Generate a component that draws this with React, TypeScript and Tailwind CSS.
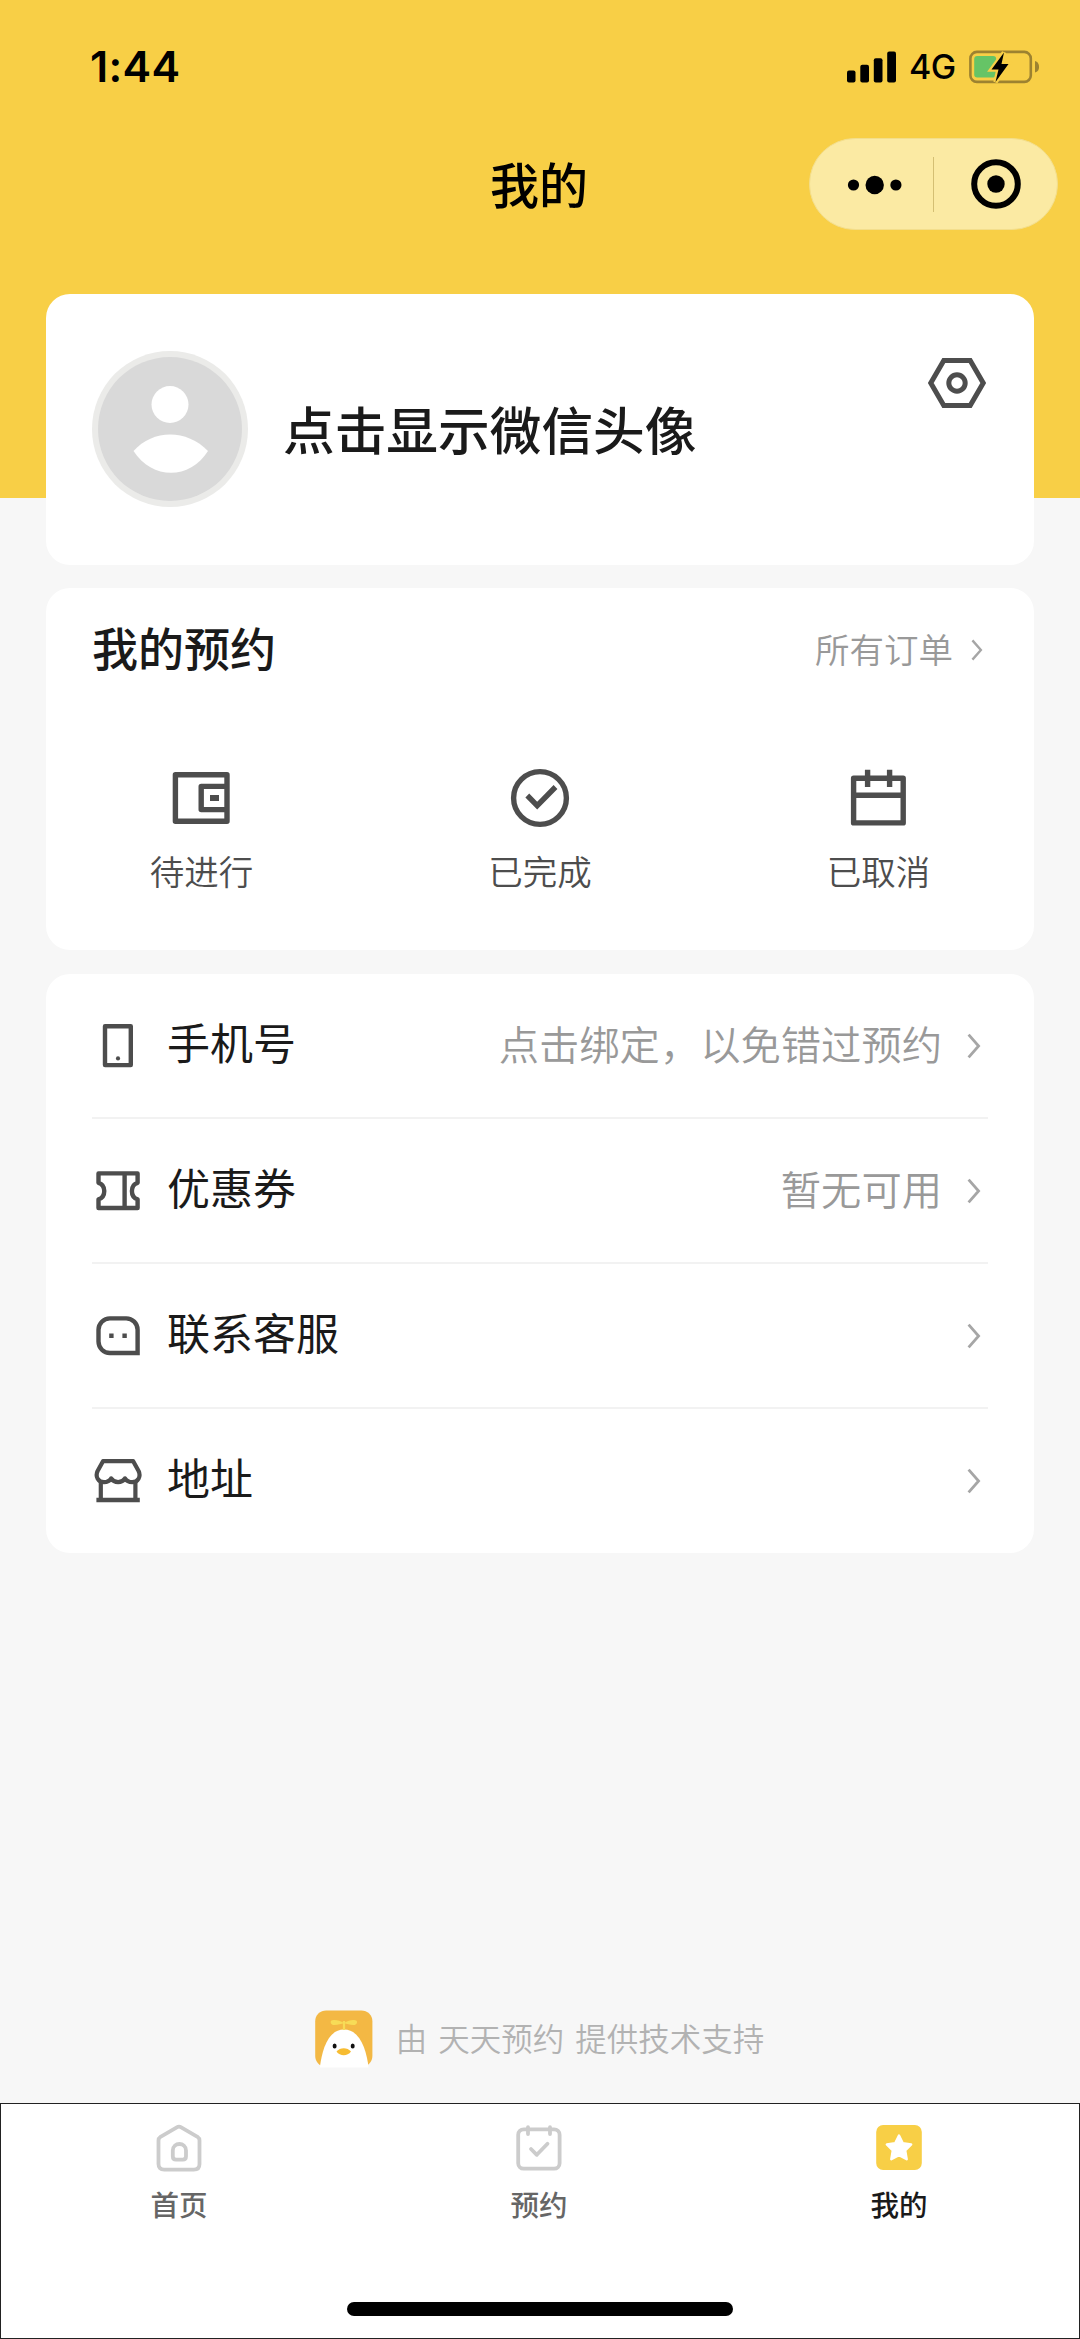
import React from 'react';
import clsx from 'clsx';

type IconProps = { className?: string };

/* ---------- status bar ---------- */

function SignalIcon() {
  return (
    <svg width="49" height="32" viewBox="0 0 49 32" fill="#000">
      <rect x="0" y="19.5" width="8.5" height="12" rx="2" />
      <rect x="13.3" y="13.7" width="8.7" height="17.8" rx="2" />
      <rect x="26.8" y="7.3" width="8.7" height="24.2" rx="2" />
      <rect x="40.2" y="0.5" width="8.8" height="31" rx="2" />
    </svg>
  );
}

function BatteryIcon() {
  return (
    <svg width="71" height="34" viewBox="0 0 71 34" fill="none">
      <rect x="1.4" y="1.9" width="60.4" height="30" rx="6.5" stroke="#9D8230" strokeWidth="2.6" />
      <path d="M66 11 C69.5 12 70 15 70 17 C70 19 69.5 21.5 66 22.6 Z" fill="#9D8230" />
      <rect x="5.2" y="6" width="22" height="21.5" rx="3" fill="#66C466" />
      <path
        d="M35 2.5 L22.5 19.6 H29.5 L26.5 32 L39.5 14 H32.5 Z"
        fill="#000"
        stroke="#F8CF46"
        strokeWidth="4.5"
        paintOrder="stroke"
      />
    </svg>
  );
}

function StatusBar() {
  return (
    <div className="flex h-[132px] items-start justify-between pl-[90px] pr-[40px] pt-[50px]">
      <span className="font-['Inter'] text-[43px] font-semibold leading-[33px] tracking-[0.3px] text-black">
        1:44
      </span>
      <div className="flex items-center">
        <SignalIcon />
        <span className="ml-[13px] w-[47px] whitespace-nowrap font-['Inter'] text-[34px] font-medium leading-[34px] tracking-[-0.5px] text-black">
          4G
        </span>
        <span className="ml-[13px]">
          <BatteryIcon />
        </span>
      </div>
    </div>
  );
}

/* ---------- nav bar ---------- */

function NavBar() {
  return (
    <div className="grid h-[104px] grid-cols-[249px_1fr_249px] items-center px-[22px]">
      <span />
      <h1 className="mb-[3px] pr-[2px] text-center text-[49px] font-medium leading-[60px] text-black">我的</h1>
      <div className="flex h-[92px] items-center rounded-full border border-[#F3DE8C] bg-[#FBEAA3]">
        <button className="flex flex-1 justify-center">
          <svg width="56" height="20" viewBox="0 0 56 20" className="ml-[7px] mt-px">
            <circle cx="6.5" cy="10" r="5.6" />
            <circle cx="27.7" cy="10" r="9.2" />
            <circle cx="48.9" cy="10" r="5.6" />
          </svg>
        </button>
        <span className="h-[55px] w-px bg-[#D4BF73]" />
        <button className="flex flex-1 justify-center">
          <svg width="50" height="50" viewBox="0 0 50 50">
            <circle cx="25" cy="25" r="21.8" fill="none" stroke="#000" strokeWidth="6" />
            <circle cx="25" cy="25" r="8.7" />
          </svg>
        </button>
      </div>
    </div>
  );
}

/* ---------- icons ---------- */

function Avatar() {
  return (
    <svg width="156" height="156" viewBox="0 0 156 156" className="mb-px shrink-0">
      <circle cx="78" cy="78" r="78" fill="#EBEBE9" />
      <circle cx="78" cy="78" r="72" fill="#D9D9D9" />
      <circle cx="78" cy="53.5" r="18.5" fill="#fff" />
      <path d="M41.5 100 C61 78 95 78 116 100 C98 129 60 129 41.5 100 Z" fill="#fff" />
    </svg>
  );
}

function SettingsIcon() {
  return (
    <svg width="58" height="52" viewBox="0 0 58 52" fill="none" stroke="#4D4D4D" strokeWidth="5">
      <path d="M15.8 3.5 H42.2 L55.2 26 L42.2 48.5 H15.8 L2.8 26 Z" />
      <circle cx="29" cy="26" r="8.2" />
    </svg>
  );
}

function WalletIcon() {
  return (
    <svg width="60" height="60" viewBox="0 0 60 60" fill="none" stroke="#4D4D4D" strokeWidth="5.4" strokeLinejoin="round">
      <rect x="3.4" y="6.7" width="51.6" height="46.6" />
      <path d="M55 18.4 H29.2 V41.6 H55" />
      <rect x="38" y="27" width="9" height="6" fill="#4D4D4D" stroke="none" />
    </svg>
  );
}

function DoneIcon() {
  return (
    <svg width="60" height="60" viewBox="0 0 60 60" fill="none" stroke="#4D4D4D" strokeWidth="5.4">
      <circle cx="30" cy="30" r="26.4" />
      <path d="M17.3 27.5 L27.2 37.6 L45.5 19" />
    </svg>
  );
}

function CalendarIcon() {
  return (
    <svg width="60" height="60" viewBox="0 0 60 60" fill="none" stroke="#4D4D4D" strokeWidth="5.4" strokeLinejoin="round">
      <rect x="4.6" y="10.3" width="49.6" height="44.6" />
      <path d="M4.6 27.3 H54.2 M18.6 1.8 V19 M40.6 1.8 V19" />
    </svg>
  );
}

function PhoneIcon() {
  return (
    <svg width="48" height="48" viewBox="0 0 48 48" fill="none" stroke="#4D4D4D" strokeWidth="4.4" strokeLinejoin="round">
      <rect x="11" y="4.3" width="25.8" height="38.8" />
      <circle cx="24" cy="36.4" r="2.1" fill="#4D4D4D" stroke="none" />
    </svg>
  );
}

function CouponIcon() {
  return (
    <svg width="48" height="48" viewBox="0 0 48 48" fill="none" stroke="#4D4D4D" strokeWidth="4.4" strokeLinejoin="round">
      <path d="M4.5 6.4 H43.6 V15.8 C36 18 36 30 43.6 32.4 V41 H4.5 V32.4 C12.2 30 12.2 18 4.5 15.8 Z" />
      <path d="M30.6 6.4 V41" />
    </svg>
  );
}

function ServiceIcon() {
  return (
    <svg width="48" height="48" viewBox="0 0 48 48" fill="none" stroke="#4D4D4D" strokeWidth="4.4">
      <path d="M43.6 41 H16 A11.4 11.4 0 0 1 4.5 29.6 V17.8 A11.4 11.4 0 0 1 16 6.4 H32 A11.4 11.4 0 0 1 43.6 17.8 Z" />
      <path d="M15.2 23.8 H19.6 M28.4 23.8 H32.8" />
    </svg>
  );
}

function StoreIcon() {
  return (
    <svg width="48" height="48" viewBox="0 0 48 48" fill="none" stroke="#4D4D4D" strokeWidth="4.2" strokeLinejoin="round">
      <path d="M9 4.2 H39.2 L44.6 14 C47.2 19.5 44 25.2 38.2 25.2 C35 25.2 32.6 24 31 21.4 C29.4 24 27 25.2 24.1 25.2 C21.2 25.2 18.8 24 17.2 21.4 C15.6 24 13.2 25.2 10 25.2 C4.2 25.2 1 19.5 3.6 14 Z" />
      <path d="M6.8 24 V43 M41.4 24 V43" />
      <path d="M2.4 43 H45.8" strokeWidth="4.6" />
    </svg>
  );
}

function Chevron({ className }: IconProps) {
  return (
    <svg viewBox="0 0 14 26" fill="none" stroke="#A6A6A6" strokeWidth="2.8" className={className}>
      <path d="M1.6 1.6 L11.6 13 L1.6 24.4" />
    </svg>
  );
}

function BrandLogo() {
  return (
    <svg width="58" height="58" viewBox="0 0 58 58">
      <rect x="0.2" y="0.4" width="57.2" height="56.6" rx="11" fill="#F3B844" />
      <path d="M4.8 57.4 C7 41 12.5 19.5 29 19.5 C45.5 19.5 51.5 41 53.6 57.4 Z" fill="#fff" />
      <path d="M29 20 V11" stroke="#F7DC57" strokeWidth="2.2" />
      <path
        d="M29 13 C24 9.6 18 9.2 16 10.8 C15 12.2 16 14.4 18 15 C22 15.4 26 14 29 13 C34 9.6 39.5 9.2 41.6 10.8 C42.7 12.2 41.8 14.4 39.6 15 C36 15.4 32 14 29 13 Z"
        fill="#F7DC57"
      />
      <ellipse cx="19.6" cy="36" rx="2" ry="2.5" fill="#111" />
      <ellipse cx="37.7" cy="36" rx="2" ry="2.5" fill="#111" />
      <path d="M21.5 41.5 C25 37 32.5 37 36 41.5 C32.5 46.5 25 46.5 21.5 41.5 Z" fill="#F7BC31" />
    </svg>
  );
}

function HomeTabIcon() {
  return (
    <svg width="48" height="48" viewBox="0 0 48 48" fill="none" stroke="#CCCCCC" strokeWidth="3.8" strokeLinejoin="round">
      <path d="M21.8 3.3 Q24 2 26.2 3.3 L42.5 12.8 Q44.5 14.2 44.5 16.5 V40 Q44.5 45.7 38.8 45.7 H9.2 Q3.5 45.7 3.5 40 V16.5 Q3.5 14.2 5.5 12.8 Z" />
      <path d="M17.8 26.5 C17.8 17.8 31 17.8 31 26.5 V32.3 Q31 35.6 27.8 35.6 H21 Q17.8 35.6 17.8 32.3 Z" />
    </svg>
  );
}

function BookingTabIcon() {
  return (
    <svg width="48" height="48" viewBox="0 0 48 48" fill="none" stroke="#CCCCCC" strokeWidth="3.8" strokeLinecap="round" strokeLinejoin="round">
      <rect x="3.2" y="5.3" width="41.4" height="39.4" rx="5.5" />
      <path d="M13 3.2 V10 M35 3.2 V10" />
      <path d="M16 25 L21.8 30.8 L32.5 19.8" />
    </svg>
  );
}

function MineTabIcon() {
  return (
    <svg width="48" height="48" viewBox="0 0 48 48">
      <rect x="1.2" y="1" width="45.6" height="45" rx="7" fill="#F8CF46" />
      <path
        d="M24 11.5 L27.8 19.3 L36.2 20.5 L30.2 26.5 L31.7 35.3 L24 31.3 L16.3 35.3 L17.8 26.5 L11.8 20.5 L20.2 19.3 Z"
        fill="#fff"
        stroke="#fff"
        strokeWidth="2.4"
        strokeLinejoin="round"
      />
    </svg>
  );
}

/* ---------- data ---------- */

const orderStates = [
  { label: '待进行', Icon: WalletIcon },
  { label: '已完成', Icon: DoneIcon },
  { label: '已取消', Icon: CalendarIcon },
];

const menuItems = [
  { label: '手机号', value: '点击绑定，以免错过预约', Icon: PhoneIcon },
  { label: '优惠券', value: '暂无可用', Icon: CouponIcon },
  { label: '联系客服', value: '', Icon: ServiceIcon },
  { label: '地址', value: '', Icon: StoreIcon },
];

const tabs = [
  { label: '首页', Icon: HomeTabIcon, active: false },
  { label: '预约', Icon: BookingTabIcon, active: false },
  { label: '我的', Icon: MineTabIcon, active: true },
];

/* ---------- sections ---------- */

function ProfileCard() {
  return (
    <section className="flex h-[271px] items-start rounded-[24px] bg-white pl-[46px] pr-[48px]">
      <div className="flex h-full flex-1 items-center">
        <Avatar />
        <span className="mb-[4px] ml-[35px] text-[51.7px] font-medium leading-[64px] text-[#1A1A1A]">
          点击显示微信头像
        </span>
      </div>
      <button className="mt-[63px]">
        <SettingsIcon />
      </button>
    </section>
  );
}

function OrdersCard() {
  return (
    <section className="mt-[23px] h-[362px] rounded-[24px] bg-white">
      <div className="flex h-[121px] items-center justify-between pl-[46px] pr-[51px]">
        <h2 className="mb-[5px] text-[46px] font-medium leading-[56px] text-[#1A1A1A]">我的预约</h2>
        <button className="mb-px flex items-center text-[34.5px] font-[350] leading-[44px] text-[#999999]">
          所有订单
          <Chevron className="ml-[18px] mt-[3px] h-[22px] w-[12px]" />
        </button>
      </div>
      <div className="flex justify-between px-[92px] pt-[59px]">
        {orderStates.map(({ label, Icon }) => (
          <div key={label} className="flex w-[127px] flex-col items-center">
            <Icon />
            <span className="mt-[20px] text-[34.5px] font-[350] leading-[44px] text-[#4D4D4D]">{label}</span>
          </div>
        ))}
      </div>
    </section>
  );
}

function MenuCard() {
  return (
    <section className="mt-[24px] rounded-[24px] bg-white px-[46px]">
      {menuItems.map(({ label, value, Icon }, i) => (
        <div
          key={label}
          className={clsx(
            'flex items-center pr-[7px]',
            i < menuItems.length - 1 ? 'h-[145px] border-b-2 border-[#F2F2F2]' : 'h-[144px]'
          )}
        >
          <span className="ml-[2px]">
            <Icon />
          </span>
          <span className="mb-[10px] ml-[25px] text-[43px] leading-[54px] text-[#1A1A1A]">{label}</span>
          <span className="mb-[5px] ml-auto text-[40.3px] font-[350] leading-[50px] text-[#999999]">{value}</span>
          <Chevron className="ml-[25px] h-[26px] w-[14px]" />
        </div>
      ))}
    </section>
  );
}

function TabBar() {
  return (
    <nav className="flex h-[236px] flex-col items-center border border-[#222222] bg-white">
      <div className="flex w-full justify-between pl-[118px] pr-[120px] pt-[20px]">
        {tabs.map(({ label, Icon, active }) => (
          <button key={label} className="flex w-[120px] flex-col items-center">
            <Icon />
            <span
              className={clsx(
                'mt-[13px] text-[28.5px] font-medium leading-[38px]',
                active ? 'text-[#1A1A1A]' : 'text-[#666666]'
              )}
            >
              {label}
            </span>
          </button>
        ))}
      </div>
      <div className="mb-[22px] mt-auto h-[14px] w-[386px] rounded-full bg-black" />
    </nav>
  );
}

export default function App() {
  return (
    <div
      lang="zh-CN"
      className="flex h-[2339px] w-[1080px] flex-col overflow-hidden bg-[#F7F7F7] font-['Noto_Sans_CJK_SC',sans-serif]"
    >
      <header className="h-[498px] shrink-0 bg-[#F8CF46]">
        <StatusBar />
        <NavBar />
      </header>

      <main className="-mt-[204px] flex flex-1 flex-col px-[46px]">
        <ProfileCard />
        <OrdersCard />
        <MenuCard />

        <div className="mb-[35px] mt-auto flex items-center justify-center pr-px">
          <BrandLogo />
          <div className="mb-[5px] ml-[23px] flex gap-[11px] text-[31.5px] font-[350] leading-[40px] text-[#B2B2B2]">
            <span>由</span>
            <span>天天预约</span>
            <span>提供技术支持</span>
          </div>
        </div>
      </main>

      <TabBar />
    </div>
  );
}
